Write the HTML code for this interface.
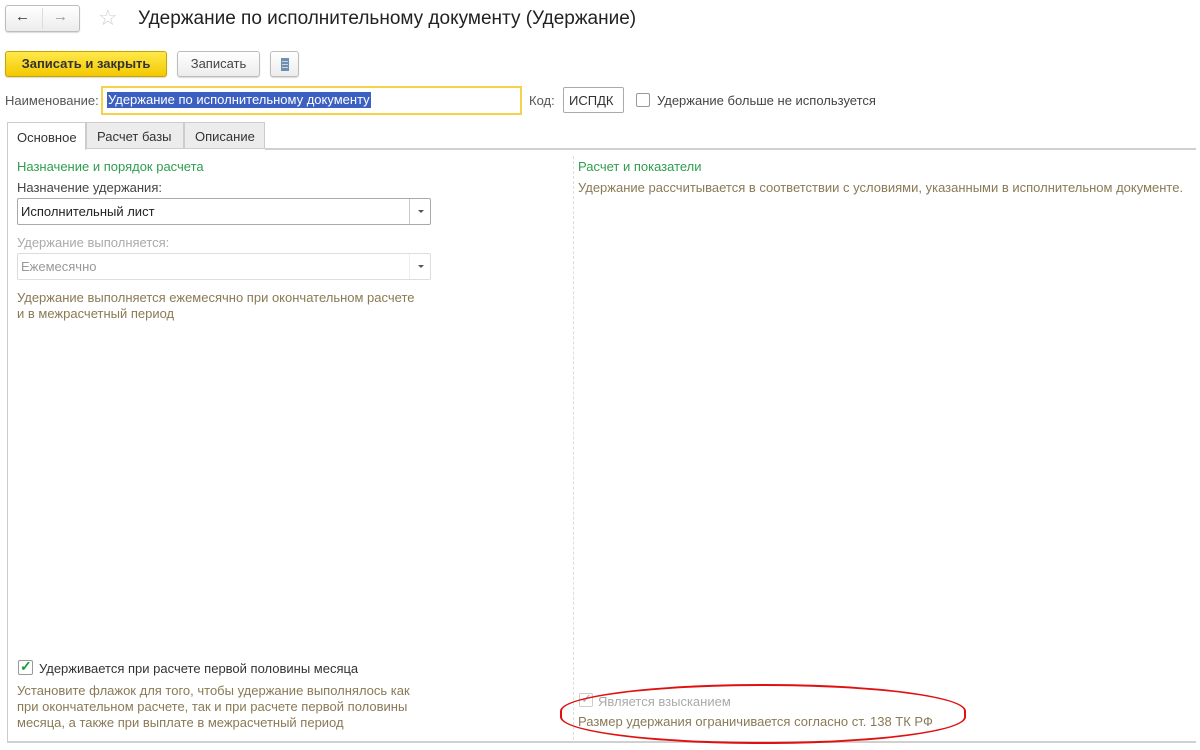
<!DOCTYPE html>
<html><head><meta charset="utf-8"><style>
*{box-sizing:border-box;margin:0;padding:0}
body{width:1200px;height:750px;background:#fff;font-family:"Liberation Sans",Arial,sans-serif;font-size:13px;color:#333;position:relative;overflow:hidden}
.a{position:absolute;white-space:nowrap}
.btn{position:absolute;border:1px solid #bdbdbd;border-radius:3px;background:linear-gradient(#fff,#ececec);box-shadow:0 1px 1px rgba(0,0,0,.15);text-align:center}
.g{color:#2f9e4f}
.br{color:#8a7a55}
.dis{color:#aaa}
.dd{position:absolute;border:1px solid #aaa;border-radius:2px;background:#fff}
.dd .arr{position:absolute;right:0;top:0;bottom:0;width:21px;border-left:1px solid #ccc}
.dd .arr:after{content:"";position:absolute;left:8px;top:11px;border-left:3px solid transparent;border-right:3px solid transparent;border-top:3px solid #555}
</style></head><body>
<div class="btn" style="left:5px;top:5px;width:75px;height:27px"></div>
<div class="a" style="left:42px;top:8px;height:21px;border-left:1px solid #ddd"></div>
<div class="a" style="left:15px;top:8px;font-size:15px;color:#333">&#8592;</div>
<div class="a" style="left:53px;top:8px;font-size:15px;color:#999">&#8594;</div>
<div class="a" style="left:98px;top:5px;font-size:22px;color:#d0d0d0">&#9734;</div>
<div class="a" style="left:138px;top:8px;font-size:19px;color:#222">Удержание по исполнительному документу (Удержание)</div>

<div class="btn" style="left:5px;top:51px;width:162px;height:26px;background:linear-gradient(#ffe94a,#f3c800);border-color:#c8a600;font-weight:bold;line-height:24px;color:#333">Записать и закрыть</div>
<div class="btn" style="left:177px;top:51px;width:83px;height:26px;line-height:24px;color:#444">Записать</div>
<div class="btn" style="left:270px;top:51px;width:29px;height:26px"><div style="position:absolute;left:10px;top:6px;width:8px;height:13px;background:repeating-linear-gradient(#6e8fb0 0 2px,#c7d6e6 2px 3px);border:1px solid #6e8fb0"></div></div>

<div class="a" style="left:5px;top:93px;color:#555">Наименование:</div>
<div class="a" style="left:101px;top:86px;width:421px;height:29px;border:2px solid #f7d14a"></div>
<div class="a" style="left:107px;top:92px;background:#3c5fc2;color:#fff;padding:0 1px;line-height:16px">Удержание по исполнительному документу</div>
<div class="a" style="left:529px;top:93px;color:#555">Код:</div>
<div class="a" style="left:563px;top:87px;width:61px;height:26px;border:1px solid #aaa;border-radius:2px;padding:5px 0 0 5px;color:#333">ИСПДК</div>
<div class="a" style="left:636px;top:93px;width:14px;height:14px;border:1px solid #999;border-radius:2px"></div>
<div class="a" style="left:657px;top:93px;color:#444">Удержание больше не используется</div>

<div class="a" style="left:7px;top:122px;width:79px;height:28px;border:1px solid #ccc;border-bottom:none;background:#fff;padding:7px 0 0 9px;color:#333">Основное</div>
<div class="a" style="left:86px;top:122px;width:98px;height:27px;border:1px solid #ccc;background:#ececec;padding:6px 0 0 10px">Расчет базы</div>
<div class="a" style="left:184px;top:122px;width:81px;height:27px;border:1px solid #ccc;background:#ececec;padding:6px 0 0 10px">Описание</div>
<div class="a" style="left:265px;top:148px;width:931px;border-top:2px solid #d0d0d0"></div>
<div class="a" style="left:7px;top:149px;height:594px;border-left:1px solid #ccc"></div>
<div class="a" style="left:7px;top:741px;width:1189px;border-top:2px solid #d0d0d0"></div>
<div class="a" style="left:573px;top:156px;height:584px;border-left:1px dashed #ddd"></div>

<div class="a g" style="left:17px;top:159px">Назначение и порядок расчета</div>
<div class="a" style="left:17px;top:180px;color:#444">Назначение удержания:</div>
<div class="dd" style="left:17px;top:198px;width:414px;height:27px"><div style="padding:5px 0 0 3px;color:#222">Исполнительный лист</div><div class="arr"></div></div>
<div class="a dis" style="left:17px;top:235px">Удержание выполняется:</div>
<div class="dd" style="left:17px;top:253px;width:414px;height:27px;border-color:#ddd"><div style="padding:5px 0 0 3px;color:#999">Ежемесячно</div><div class="arr" style="border-color:#eee"></div></div>
<div class="a br" style="left:17px;top:290px;line-height:16px">Удержание выполняется ежемесячно при окончательном расчете<br>и в межрасчетный период</div>

<div class="a g" style="left:578px;top:159px">Расчет и показатели</div>
<div class="a br" style="left:578px;top:180px">Удержание рассчитывается в соответствии с условиями, указанными в исполнительном документе.</div>

<div class="a" style="left:18px;top:660px;width:15px;height:15px;border:1px solid #999;border-radius:2px"></div>
<div class="a" style="left:20px;top:658px;font-size:14px;font-weight:bold;color:#1a9a3a">&#10003;</div>
<div class="a" style="left:39px;top:661px;color:#333">Удерживается при расчете первой половины месяца</div>
<div class="a br" style="left:17px;top:683px;line-height:16px">Установите флажок для того, чтобы удержание выполнялось как<br>при окончательном расчете, так и при расчете первой половины<br>месяца, а также при выплате в межрасчетный период</div>

<div class="a" style="left:579px;top:693px;width:14px;height:14px;border:1px solid #ccc;border-radius:2px"></div>
<div class="a" style="left:581px;top:691px;font-size:13px;color:#aaa">&#10003;</div>
<div class="a dis" style="left:598px;top:694px">Является взысканием</div>
<div class="a br" style="left:578px;top:714px">Размер удержания ограничивается согласно ст. 138 ТК РФ</div>
<div class="a" style="left:560px;top:684px;width:406px;height:60px;border:2px solid #e01010;border-radius:50%/45%"></div>
</body></html>
